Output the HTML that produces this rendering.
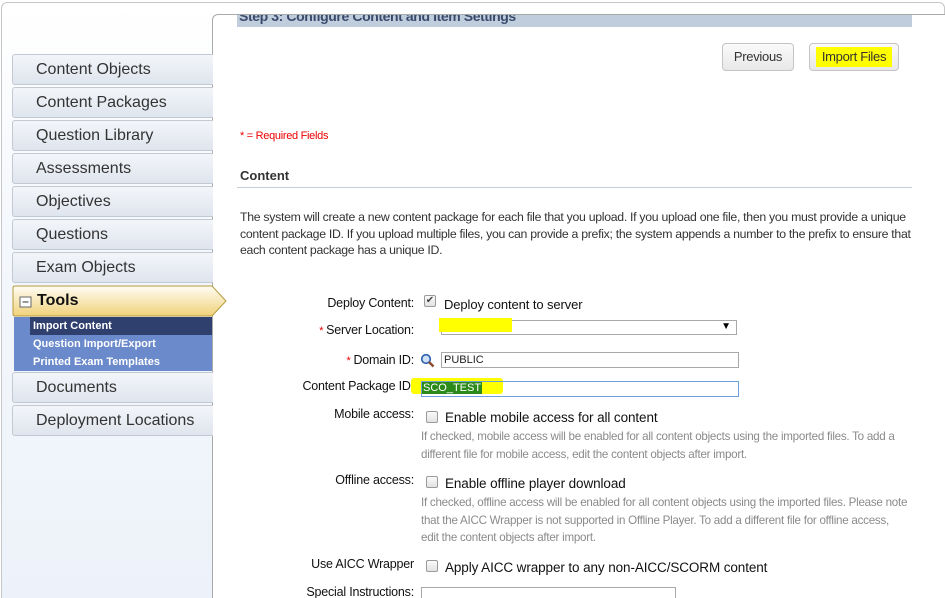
<!DOCTYPE html>
<html><head><meta charset="utf-8"><style>
*{margin:0;padding:0;box-sizing:border-box}
html,body{width:945px;height:598px;overflow:hidden}
body{background:#fff;font-family:"Liberation Sans",Arial,sans-serif;position:relative}
.a{position:absolute;white-space:nowrap}
#outer{left:1px;top:2px;width:944px;height:596px;border:1px solid #c8c8c8;border-bottom:none;border-radius:6px 6px 0 0;background:linear-gradient(#fff 0,#f4f7fc 40%,#edf2fa 100%)}
#main{left:212px;top:14px;width:733px;height:584px;border:1px solid #a9a9a9;border-right:none;border-bottom:none;border-top-left-radius:6px;background:#fff}
.mi{position:absolute;left:12px;width:201px;height:31px;border:1px solid #c3c9d3;border-right:none;border-radius:3px 0 0 3px;background:linear-gradient(#f3f5f9,#dfe5ee);font-size:16px;color:#333;padding-left:23px;line-height:30px}
.lbl{position:absolute;font-size:12.5px;color:#111;text-align:right;white-space:nowrap;letter-spacing:-0.2px}
.cb{position:absolute;width:12px;height:12px;border:1px solid #9a9a9a;border-radius:2px;background:linear-gradient(#fafafa,#e2e2e2)}
.ct{position:absolute;font-size:13.5px;color:#111;white-space:nowrap;letter-spacing:-0.1px}
.hint{position:absolute;left:421px;font-size:11.6px;color:#8a8a8a;line-height:17.5px;white-space:nowrap;letter-spacing:-0.25px}
.req{color:#e00;font-size:11px}
.inp{position:absolute;border:1px solid #a8a8a8;background:#fff;height:16px}
.btn{position:absolute;top:43px;height:28px;border:1px solid #c4c4c4;border-radius:4px;background:linear-gradient(#fafafa,#e8e8e8);font-size:13px;color:#333;text-align:center;line-height:26px;letter-spacing:-0.3px}
</style></head><body>
<div id="outer" class="a"></div>
<div id="main" class="a"></div>
<div class="a" style="left:237px;top:15px;width:675px;height:12px;background:#bfcddc;overflow:hidden"><div style="font-size:14px;font-weight:bold;color:#3a4a6c;margin-top:-7px;padding-left:2px;letter-spacing:-0.4px">Step 3: Configure Content and Item Settings</div></div>

<div class="mi" style="top:54px">Content Objects</div>
<div class="mi" style="top:87px">Content Packages</div>
<div class="mi" style="top:120px">Question Library</div>
<div class="mi" style="top:153px">Assessments</div>
<div class="mi" style="top:186px">Objectives</div>
<div class="mi" style="top:219px">Questions</div>
<div class="mi" style="top:252px">Exam Objects</div>
<svg class="a" style="left:12px;top:285px" width="215" height="32"><defs><linearGradient id="g" x1="0" y1="0" x2="0" y2="1"><stop offset="0" stop-color="#fffdf4"/><stop offset="1" stop-color="#f0d27a"/></linearGradient></defs><path d="M1 3 Q1 1 3 1 H200 L214 16 L200 31 H3 Q1 31 1 29 Z" fill="url(#g)" stroke="#b59a3c"/><rect x="8" y="12" width="11" height="10" fill="#fff" stroke="#666"/><line x1="10.5" y1="17" x2="16.5" y2="17" stroke="#333"/></svg>
<div class="a" style="left:37px;top:292px;font-size:16px;font-weight:bold;color:#111">Tools</div>
<div class="a" style="left:14px;top:317px;width:198px;height:54px;background:#6b8acb"></div>
<div class="a" style="left:30px;top:317px;width:182px;height:18px;background:#2f3f6e"></div>
<div class="a" style="left:33px;top:320px;font-size:11px;font-weight:bold;color:#fff">Import Content</div>
<div class="a" style="left:33px;top:338px;font-size:11px;font-weight:bold;color:#fff">Question Import/Export</div>
<div class="a" style="left:33px;top:356px;font-size:11px;font-weight:bold;color:#fff">Printed Exam Templates</div>
<div class="mi" style="top:372px">Documents</div>
<div class="mi" style="top:405px">Deployment Locations</div>

<div class="btn" style="left:722px;width:72px">Previous</div>
<div class="btn" style="left:809px;width:90px"><span style="background:#ffff00;padding:2px 6px 3px">Import Files</span></div>

<div class="a" style="left:240px;top:130px;font-size:11px;color:#e00;letter-spacing:-0.3px">* = Required Fields</div>
<div class="a" style="left:240px;top:168px;font-size:13px;font-weight:bold;color:#333">Content</div>
<div class="a" style="left:237px;top:187px;width:675px;height:1px;background:#c5ccd6"></div>
<div class="a" style="left:240px;top:209px;font-size:12.3px;color:#333;line-height:16.5px;letter-spacing:-0.3px">The system will create a new content package for each file that you upload. If you upload one file, then you must provide a unique<br>content package ID. If you upload multiple files, you can provide a prefix; the system appends a number to the prefix to ensure that<br>each content package has a unique ID.</div>

<div class="lbl" style="right:531px;top:296px">Deploy Content:</div>
<div class="cb" style="left:424px;top:295px;font-size:10px;line-height:10px;text-align:center;color:#444">✔</div>
<div class="ct" style="left:444px;top:297px;font-size:13px">Deploy content to server</div>

<div class="lbl" style="right:531px;top:323px"><span class="req">* </span>Server Location:</div>
<div class="inp" style="left:441px;top:320px;width:296px;height:15px"><span style="position:absolute;right:5px;top:0;font-size:10px">▼</span></div>
<div class="a" style="left:439px;top:318px;width:73px;height:14px;background:#ffff00"></div>

<div class="lbl" style="right:531px;top:353px"><span class="req">* </span>Domain ID:</div>
<svg class="a" style="left:420px;top:353px" width="16" height="16"><circle cx="6" cy="6" r="4.3" fill="#cfe0f7" stroke="#2a5db0" stroke-width="1.6"/><line x1="9" y1="9" x2="13.5" y2="13.5" stroke="#8a4a2a" stroke-width="2.4"/></svg>
<div class="inp" style="left:441px;top:352px;width:298px"><span style="font-size:11px;color:#222;position:absolute;left:2px;top:1px">PUBLIC</span></div>

<div class="lbl" style="right:531px;top:379px">Content Package ID:</div>
<div class="a" style="left:411px;top:378px;width:92px;height:16px;background:#ffff00;border-radius:3px"></div>
<div class="inp" style="left:421px;top:381px;width:318px;border-color:#6e9fdc;background:transparent"><span style="font-size:11px;color:#fff;position:absolute;left:0;top:0;background:#2b8a1a;padding:0 1px">SCO_TEST</span></div>

<div class="lbl" style="right:531px;top:407px">Mobile access:</div>
<div class="cb" style="left:426px;top:411px"></div>
<div class="ct" style="left:445px;top:410px">Enable mobile access for all content</div>
<div class="hint" style="top:428px">If checked, mobile access will be enabled for all content objects using the imported files. To add a<br>different file for mobile access, edit the content objects after import.</div>

<div class="lbl" style="right:531px;top:473px">Offline access:</div>
<div class="cb" style="left:426px;top:476px"></div>
<div class="ct" style="left:445px;top:476px">Enable offline player download</div>
<div class="hint" style="top:494px">If checked, offline access will be enabled for all content objects using the imported files. Please note<br>that the AICC Wrapper is not supported in Offline Player. To add a different file for offline access,<br>edit the content objects after import.</div>

<div class="lbl" style="right:531px;top:557px">Use AICC Wrapper</div>
<div class="cb" style="left:426px;top:560px"></div>
<div class="ct" style="left:445px;top:560px">Apply AICC wrapper to any non-AICC/SCORM content</div>

<div class="lbl" style="right:531px;top:585px;height:13px;overflow:hidden">Special Instructions:</div>
<div class="a" style="left:421px;top:587px;width:255px;height:11px;border:1px solid #a8a8a8;border-bottom:none;background:#fff"></div>
</body></html>
